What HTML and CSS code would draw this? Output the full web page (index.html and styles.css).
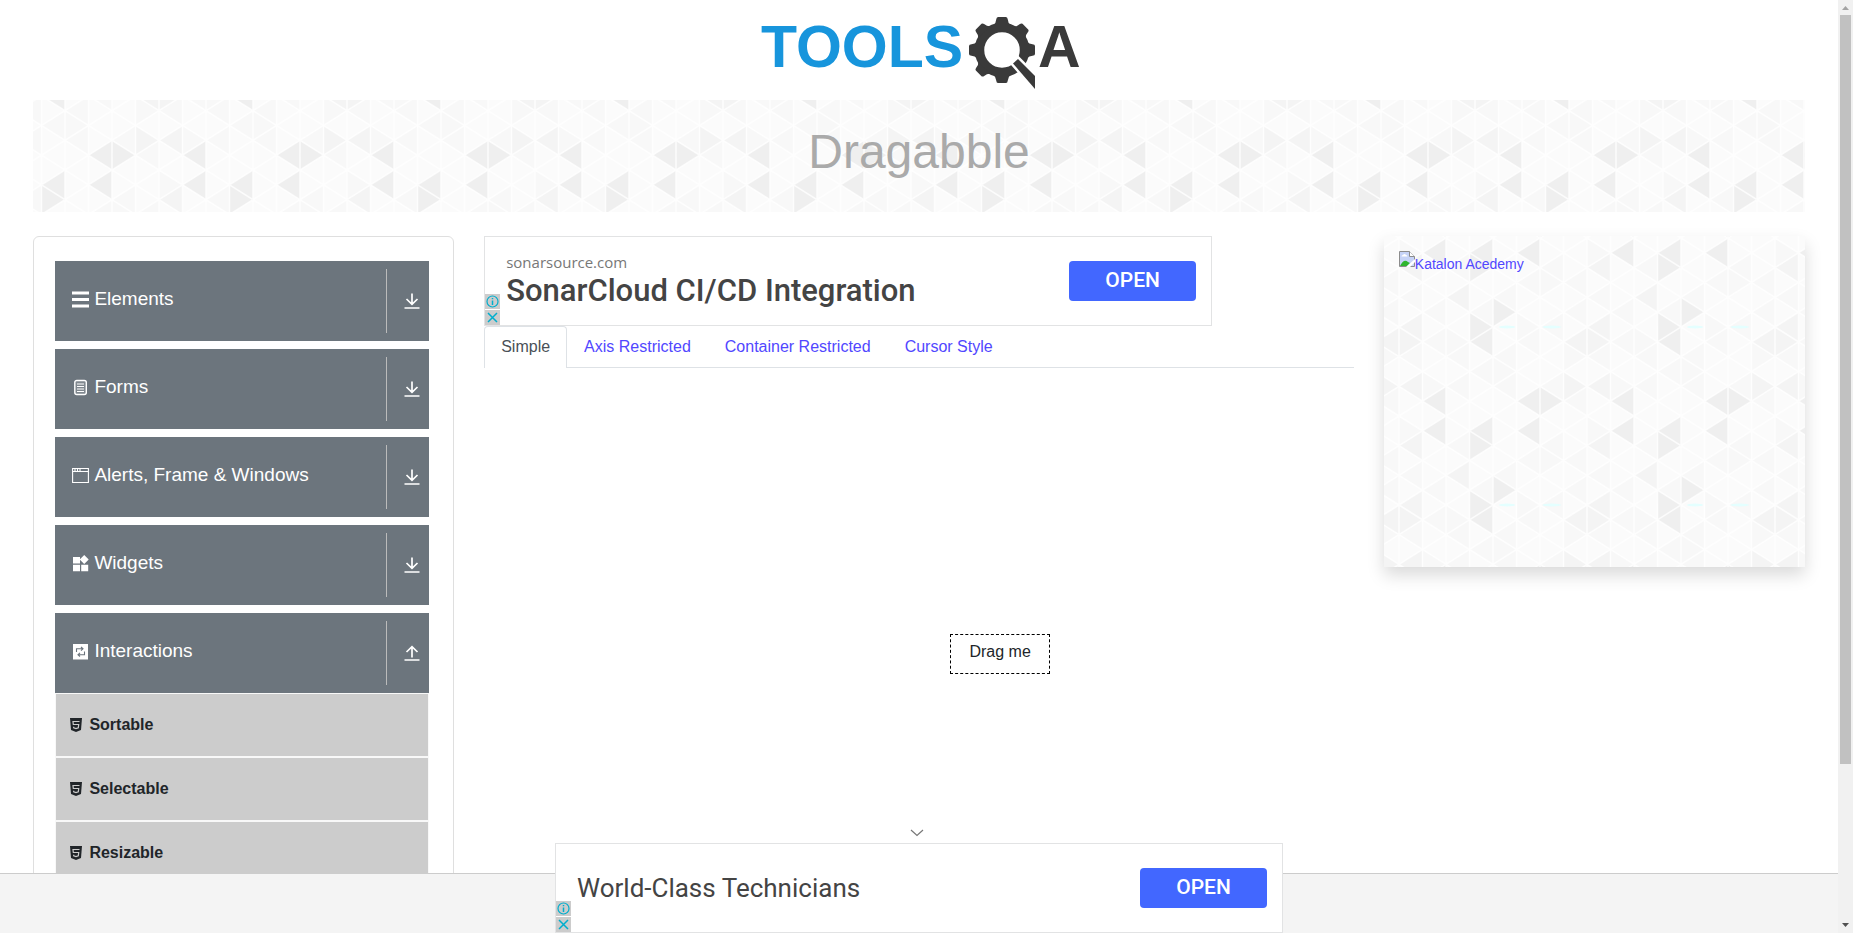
FILE: index.html
```html
<!DOCTYPE html>
<html lang="en">
<head>
<meta charset="utf-8">
<title>ToolsQA - Dragabble</title>
<link rel="stylesheet" href="styles.css">
</head>
<body>
<svg class="sprite" aria-hidden="true">
  <symbol id="down" viewBox="0 0 16 16"><path d="M8 .5v10.500M2.500 6L8 11.300 13.500 6M.5 15h15" fill="none" stroke="currentColor" stroke-width="1.700"/></symbol>
  <symbol id="up" viewBox="0 0 16 16"><path d="M8 12.500V2M2.500 7L8 1.700 13.500 7M.5 15h15" fill="none" stroke="currentColor" stroke-width="1.700"/></symbol>
  <symbol id="html5" viewBox="0 0 12 14"><path d="M0 0h12l-1 12-5 2-5-2z" fill="currentColor"/><path d="M9.500 3.500H3l.3 3h5.400l-.4 3.300L6 10.600l-2.300-.8-.1-1" fill="none" stroke="#ccc" stroke-width="1.200"/></symbol>
  <symbol id="info" viewBox="0 0 15 15"><circle cx="7.500" cy="7.500" r="5.500" fill="none" stroke="#00aecd" stroke-width="1.200"/><path d="M7.500 6.500v4.500M7.500 4v1.300" stroke="#00aecd" stroke-width="1.500"/></symbol>
  <symbol id="close" viewBox="0 0 15 15"><path d="M3 3l9 9M12 3l-9 9" stroke="#00aecd" stroke-width="1.500"/></symbol>
</svg>

<div class="page">
  <header class="site-header">
    <a href="#" aria-label="TOOLSQA">
      <svg class="logo" viewBox="0 0 360 100">
        <text class="logo-tools" x="22" y="67">TOOLS</text>
        <g transform="translate(263 50)" fill="#3a3a3a">
          <circle r="22.500" fill="none" stroke="#3a3a3a" stroke-width="9.500"/>
          <g>
            <path id="tooth" d="M-8.500-25Q-6-27-5.800-30.500Q-5.500-33-4-33H4Q5.500-33 5.800-30.500Q6-27 8.500-25z"/>
            <use href="#tooth" transform="rotate(45)"/><use href="#tooth" transform="rotate(90)"/>
            <use href="#tooth" transform="rotate(180)"/><use href="#tooth" transform="rotate(225)"/>
            <use href="#tooth" transform="rotate(270)"/><use href="#tooth" transform="rotate(315)"/>
          </g>
          <path d="M11 13.500L16 9 33 26V39z" stroke="#fff" stroke-width="5"/>
          <path d="M11 13.500L16 9 33 26V39z"/>
        </g>
        <text class="logo-qa" x="299" y="67">A</text>
      </svg>
    </a>
  </header>

  <div class="container">
    <div class="banner pattern"><h1>Dragabble</h1></div>

    <div class="columns">
      <nav class="sidebar">
        <div class="group">
          <button class="group-header"><svg class="icon" viewBox="0 0 17 17"><path d="M0 2h17M0 8.500h17M0 15h17" stroke="#fff" stroke-width="3.200"/></svg><span class="label">Elements</span><span class="toggle"><svg class="arrow"><use href="#down"/></svg></span></button>
        </div>
        <div class="group">
          <button class="group-header"><svg class="icon" viewBox="0 0 17 17"><rect x="2.800" y="1.500" width="11.500" height="14" rx="2" fill="#a0a5aa" fill-opacity=".4" stroke="#fff" stroke-width="1.400"/><path d="M5 5h7M5 7.500h7M5 10h7M5 12.500h7" stroke="#fff" stroke-width="1"/></svg><span class="label">Forms</span><span class="toggle"><svg class="arrow"><use href="#down"/></svg></span></button>
        </div>
        <div class="group">
          <button class="group-header"><svg class="icon" viewBox="0 0 17 17"><path d="M.6 1.500h15.800v14H.6zM.6 4.500h15.800M3 1.500v3M5.500 1.500v3M8 1.500v3" fill="none" stroke="#fff" stroke-width="1.100"/></svg><span class="label">Alerts, Frame &amp; Windows</span><span class="toggle"><svg class="arrow"><use href="#down"/></svg></span></button>
        </div>
        <div class="group">
          <button class="group-header"><svg class="icon" viewBox="0 0 17 17"><path d="M1 2h7v6.500H1zM1 9.700h7v6.500H1zM9.200 9.700h7v6.500h-7zM12.200 0l4.500 4.500-4.500 4.500-4.500-4.500z" fill="#fff"/></svg><span class="label">Widgets</span><span class="toggle"><svg class="arrow"><use href="#down"/></svg></span></button>
        </div>
        <div class="group">
          <button class="group-header"><svg class="icon" viewBox="0 0 17 17"><path d="M1 1h15v15.500H1z" fill="#fff"/><path d="M4.500 9V5.800h6M12.500 8.500v3.200h-6M9 4l2 1.800-2 1.800M8 9.900l-2 1.800 2 1.800" fill="none" stroke="#6c757d" stroke-width="1.100"/></svg><span class="label">Interactions</span><span class="toggle"><svg class="arrow"><use href="#up"/></svg></span></button>
          <ul class="items">
            <li><a href="#"><svg class="badge"><use href="#html5"/></svg>Sortable</a></li>
            <li><a href="#"><svg class="badge"><use href="#html5"/></svg>Selectable</a></li>
            <li><a href="#"><svg class="badge"><use href="#html5"/></svg>Resizable</a></li>
          </ul>
        </div>
      </nav>

      <main>
        <section class="ad">
          <div class="ad-copy"><span class="ad-domain">sonarsource.com</span><span class="ad-title">SonarCloud CI/CD Integration</span></div>
          <button class="open">OPEN</button>
          <div class="ad-choices"><svg><use href="#info"/></svg><svg><use href="#close"/></svg></div>
        </section>
        <nav class="tabs">
          <a class="tab active" href="#">Simple</a><a class="tab" href="#">Axis Restricted</a><a class="tab" href="#">Container Restricted</a><a class="tab" href="#">Cursor Style</a>
        </nav>
        <div class="canvas"><div class="drag-box">Drag me</div></div>
      </main>

      <aside class="promo pattern">
        <a href="#"><svg class="broken" viewBox="0 0 16 16"><path d="M.5 .5h10l5 5v10H.5z" fill="#c6d3f7" stroke="#8c8c8c"/><path d="M1 15q4-8 8-4l2 1-3 3z" fill="#2fb52f"/><path d="M2.500 5.500q0-1.500 1.500-1.500 1.500-2 3 0 1.500 0 1.500 1.500z" fill="#fff"/><path d="M7 16l9-8v3l-5 5z" fill="#fff"/><path d="M10.500 .5v5h5" fill="#fff" stroke="#8c8c8c"/></svg><span>Katalon Acedemy</span></a>
      </aside>
    </div>
  </div>

  <div class="anchor">
    <button class="collapse" aria-label="Collapse"><svg viewBox="0 0 14 8"><path d="M1 1l6 5.500L13 1" fill="none" stroke="#777" stroke-width="1.200"/></svg></button>
    <section class="ad">
      <div class="ad-copy"><span class="ad-title light">World-Class Technicians</span></div>
      <button class="open">OPEN</button>
      <div class="ad-choices"><svg><use href="#info"/></svg><svg><use href="#close"/></svg></div>
    </section>
  </div>
</div>

<div class="scrollbar" aria-hidden="true">
  <svg viewBox="0 0 15 15"><path d="M4 10l3.500-4L11 10z" fill="#a3a3a3"/></svg>
  <div class="track"><div class="thumb"></div></div>
  <svg viewBox="0 0 15 15"><path d="M4 5l3.500 4L11 5z" fill="#505050"/></svg>
</div>
</body>
</html>
```
FILE: styles.css
```css
* { box-sizing: border-box; }
body {
  margin: 0;
  height: 100vh;
  display: flex;
  overflow: hidden;
  font: 16px/24px "Liberation Sans", Arial, sans-serif;
  color: #212529;
  background: #fff;
}
a { color: #5147ff; text-decoration: none; }
button { font: inherit; border: 0; padding: 0; cursor: pointer; }
svg { display: block; }
.sprite { position: absolute; width: 0; height: 0; }

.page { flex: 1; position: relative; overflow: hidden; }
.site-header { height: 100px; display: flex; justify-content: center; }
.logo { width: 360px; height: 100px; }
.logo text { font-family: "Liberation Sans", Arial, sans-serif; font-weight: 700; font-size: 59px; }
.logo-tools { fill: #1795dc; }
.logo-qa { fill: #3a3a3a; }

.container { width: 98%; margin: 0 auto; padding: 0 15px; }
.pattern {
  background-color: #fbfbfb;
  background-size: 188px 178px;
  background-image: url("data:image/svg+xml,%3Csvg xmlns='http://www.w3.org/2000/svg' width='188' height='178' viewBox='0 0 8 12' preserveAspectRatio='none'%3E%3Cpath fill='%23f8f8f8' d='M0 4l1-1v2zM0 8l1-1v2zM1 5l1-1v2zM1 7l1-1v2zM2 2l1-1v2zM2 8l1-1v2zM2 10l1-1v2zM3 5l1-1v2zM3 9l1-1v2zM4 4l1-1v2zM4 8l1-1v2zM4 10l1-1v2zM5 3l1-1v2zM5 7l1-1v2zM6 2l1-1v2zM6 6l1-1v2zM6 10l1-1v2zM7 3l1-1v2zM7 5l1-1v2zM7 11l1-1v2zM0 0l1 1-1 1zM1 9l1 1-1 1zM2 6l1 1-1 1zM4 8l1 1-1 1zM5 5l1 1-1 1zM6 2l1 1-1 1zM7 7l1 1-1 1z'/%3E%3Cpath fill='%23f4f4f4' d='M0 2l1-1v2zM0 6l1-1v2zM2 4l1-1v2zM7 7l1-1v2zM0 6l1 1-1 1zM7 9l1 1-1 1zM0 10l1-1v2z'/%3E%3Cpath fill='%23efefef' d='M1 1l1-1v2zM3 1l1-1v2zM5 1l1-1v2zM3 1l1 1-1 1zM4 4l1 1-1 1zM3 5l1 1-1 1zM3 7l1-1v2zM1 11l1-1v2zM5 11l1-1v2zM6 10l1 1-1 1z'/%3E%3Cg fill='%23e4ffff'%3E%3Cellipse cx='4.600' cy='6' rx='.35' ry='.1'/%3E%3Cellipse cx='6.500' cy='6' rx='.4' ry='.1'/%3E%3C/g%3E%3Cg fill='none' stroke='%23fff' stroke-opacity='.8' stroke-width='1.500'%3E%3Cpath vector-effect='non-scaling-stroke' d='M0 0v12M1 0v12M2 0v12M3 0v12M4 0v12M5 0v12M6 0v12M7 0v12M8 0v12M0-8l8 8M0-6l8 8M0-4l8 8M0-2l8 8M0 0l8 8M0 2l8 8M0 4l8 8M0 6l8 8M0 8l8 8M0 10l8 8M0 12l8 8M0 0l8-8M0 2l8-8M0 4l8-8M0 6l8-8M0 8l8-8M0 10l8-8M0 12l8-8M0 14l8-8M0 16l8-8M0 18l8-8M0 20l8-8'/%3E%3C/g%3E%3C/svg%3E");
}
.banner { padding: 23px 0 31px; text-align: center; background-position: 126px 70px; }
.banner h1 { margin: 0; font-size: 48px; line-height: 58px; font-weight: 400; color: #aaa; }

.columns {
  display: grid;
  grid-template-columns: minmax(0, calc(25% - 22px)) minmax(0, 1fr) minmax(0, calc(25% - 22px));
  gap: 30px;
  margin-top: 24px;
  align-items: start;
}

.sidebar { border: 1px solid #dfdfdf; border-radius: 6px; padding: 24px 24px 24px 21px; }
.group { margin-bottom: 8px; }
.group-header {
  width: 100%;
  height: 80px;
  display: flex;
  align-items: center;
  padding-left: 17px;
  background: #6c757d;
  color: #fff;
  font-size: 19px;
  text-align: left;
}
.icon { width: 17px; height: 17px; margin: 0 5px 3px 0; }
.label { flex: 1; padding-bottom: 4px; }
.toggle { width: 43px; height: 64px; border-left: 1px solid #bbb; display: flex; align-items: center; justify-content: center; padding-left: 8px; }
.arrow { width: 16px; height: 16px; }
.items { list-style: none; margin: 0; padding: 0; }
.items li { border: 1px solid #f8f8f8; background: #ccc; }
.items a { display: flex; align-items: center; height: 62px; padding-left: 14px; color: #212529; font-weight: 700; }
.badge { width: 12px; height: 14px; margin-right: 7px; }

.ad { position: relative; width: 728px; height: 90px; display: flex; align-items: center; justify-content: space-between; border: 1px solid #e2e3e4; background: #fff; padding: 0 15px 0 21px; }
.ad-copy { display: flex; flex-direction: column; gap: 2px; }
.ad-domain { font-family: "Open Sans", "Noto Sans", sans-serif; font-size: 15px; line-height: 18px; color: #777; }
.ad-title { font-family: Roboto, sans-serif; font-size: 31px; line-height: 36px; font-weight: 500; color: #444; }
.ad-title.light { font-size: 26px; font-weight: 400; }
.open { width: 127px; height: 40px; border-radius: 4px; background: #4267ff; color: #fff; font-family: Roboto, sans-serif; font-size: 21px; font-weight: 500; padding-bottom: 2px; }
.ad-choices { position: absolute; left: 0; bottom: 0; display: flex; flex-direction: column; gap: 1px; }
.ad-choices svg { width: 15px; height: 15px; background: #ccc; }

.tabs { display: flex; border-bottom: 1px solid #dee2e6; }
.tab { border: 1px solid transparent; border-bottom: 0; border-radius: 4px 4px 0 0; padding: 8px 16px; }
.tab.active { color: #495057; background: #fff; border-color: #dee2e6; margin-bottom: -1px; }
.canvas { position: relative; height: 600px; }
.drag-box { position: absolute; left: 466px; top: 266px; width: 100px; height: 40px; border: 1px dashed #000; text-align: center; padding-top: 5px; }

.promo { min-height: 331px; padding: 15px; font-size: 14px; line-height: 26px; background-position: 15px 2px; box-shadow: 0 8px 16px rgba(0, 0, 0, .15); }
.promo a { display: flex; align-items: flex-start; }
.broken { width: 16px; height: 16px; }

.anchor { position: absolute; left: 0; right: 0; bottom: 0; height: 60px; border-top: 1px solid #ccc; background: #f4f4f4; display: flex; flex-direction: column; align-items: center; justify-content: flex-end; }
.anchor .ad { flex: none; }
.collapse { flex: none; width: 50px; height: 20px; margin-right: 4px; padding-top: 6px; background: transparent; display: flex; justify-content: center; align-items: flex-start; }
.collapse svg { width: 14px; height: 8px; }

.scrollbar { width: 15px; background: #f1f1f1; display: flex; flex-direction: column; }
.track { flex: 1; padding: 0 2px; }
.thumb { height: 83%; background: #c1c1c1; }
```
